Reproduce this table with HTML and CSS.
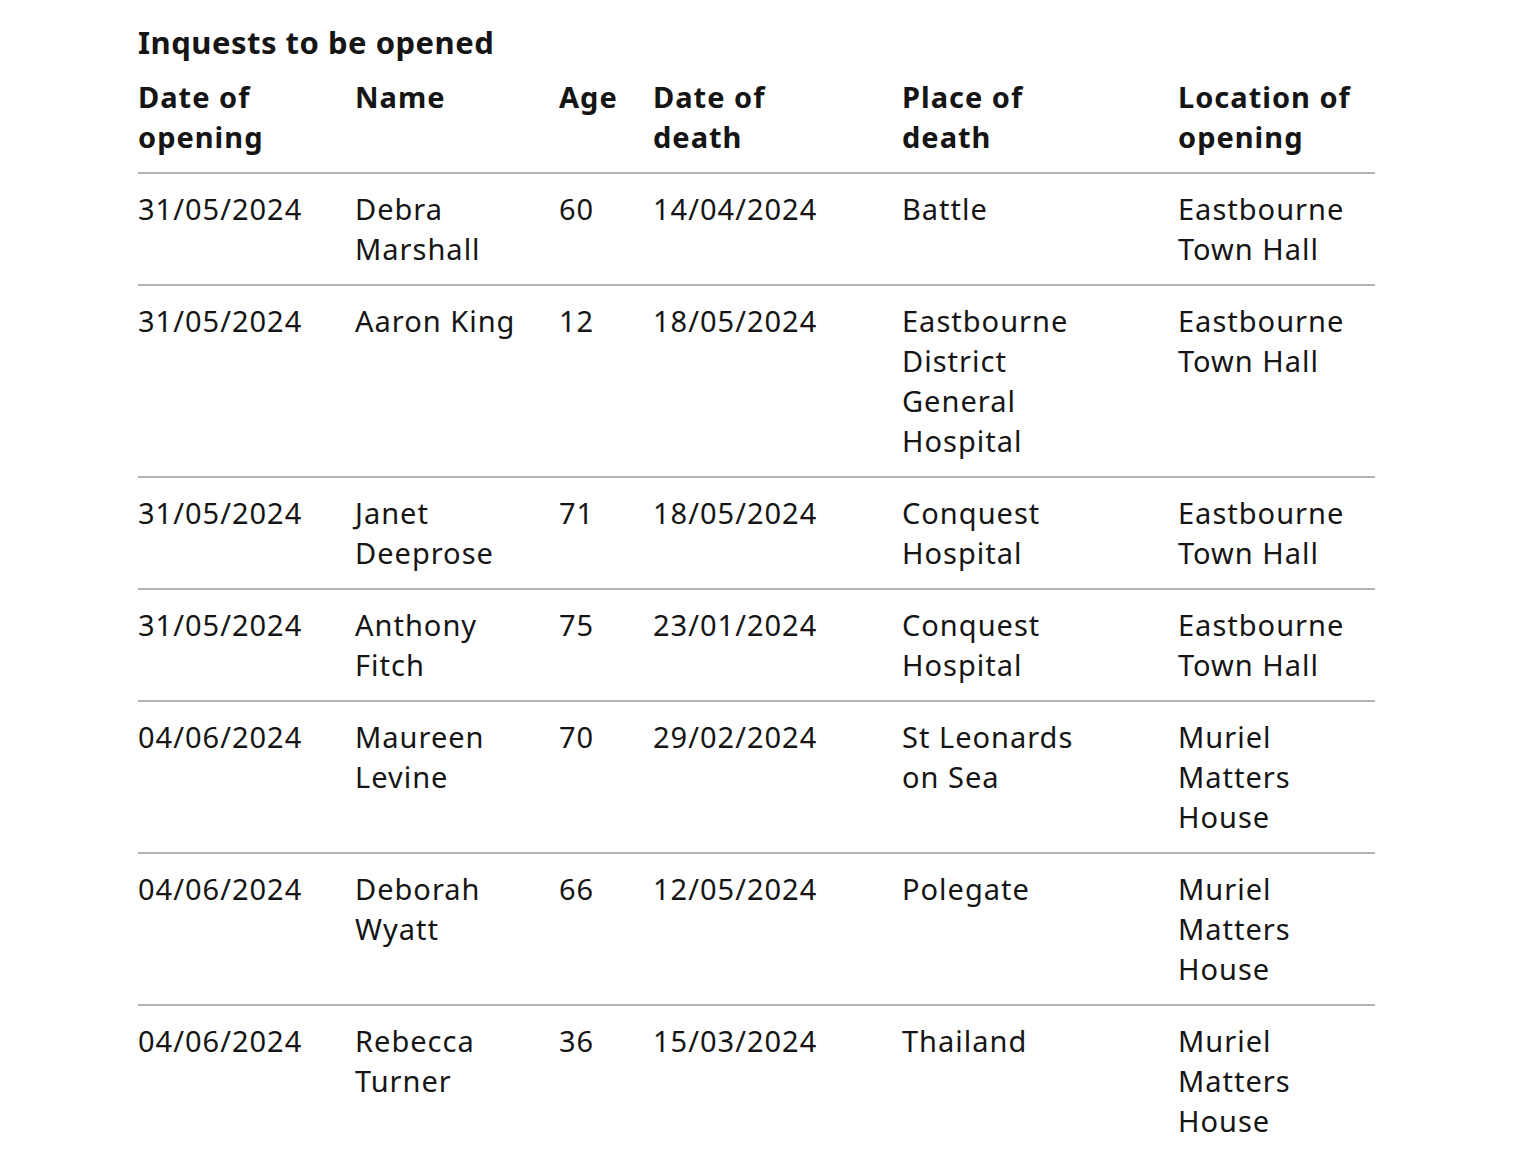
FILE: index.html
```html
<!DOCTYPE html>
<html lang="en">
<head>
<meta charset="utf-8">
<title>Inquests to be opened</title>
<link rel="stylesheet" href="styles.css">
</head>
<body>
<main class="page">
<table class="inquests">
<caption class="title">Inquests to be opened</caption>
<colgroup>
<col class="w-open"><col class="w-name"><col class="w-age"><col class="w-dod"><col class="w-place"><col class="w-loc">
</colgroup>
<thead>
<tr><th>Date of opening</th><th>Name</th><th>Age</th><th class="dod">Date of death</th><th class="place">Place of death</th><th>Location of opening</th></tr>
</thead>
<tbody>
<tr><td>31/05/2024</td><td>Debra Marshall</td><td>60</td><td class="dod">14/04/2024</td><td class="place">Battle</td><td>Eastbourne Town Hall</td></tr>
<tr><td>31/05/2024</td><td>Aaron King</td><td>12</td><td class="dod">18/05/2024</td><td class="place">Eastbourne District General Hospital</td><td>Eastbourne Town Hall</td></tr>
<tr><td>31/05/2024</td><td>Janet Deeprose</td><td>71</td><td class="dod">18/05/2024</td><td class="place">Conquest Hospital</td><td>Eastbourne Town Hall</td></tr>
<tr><td>31/05/2024</td><td>Anthony Fitch</td><td>75</td><td class="dod">23/01/2024</td><td class="place">Conquest Hospital</td><td>Eastbourne Town Hall</td></tr>
<tr><td>04/06/2024</td><td>Maureen Levine</td><td>70</td><td class="dod">29/02/2024</td><td class="place">St Leonards on Sea</td><td>Muriel Matters House</td></tr>
<tr><td>04/06/2024</td><td>Deborah Wyatt</td><td>66</td><td class="dod">12/05/2024</td><td class="place">Polegate</td><td>Muriel Matters House</td></tr>
<tr><td>04/06/2024</td><td>Rebecca Turner</td><td>36</td><td class="dod">15/03/2024</td><td class="place">Thailand</td><td>Muriel Matters House</td></tr>
</tbody>
</table>
</main>
</body>
</html>
```
FILE: styles.css
```css
html, body {
  margin: 0;
  padding: 0;
  background: #ffffff;
}
body {
  font-family: "Noto Sans", "Open Sans", sans-serif;
  color: #151515;
}
.page {
  padding: 22px 0 0 138px;
}
.inquests {
  border-collapse: collapse;
  table-layout: fixed;
  width: 1237px;
  font-size: 29px;
  line-height: 40px;
  letter-spacing: 1px;
}
.title {
  caption-side: top;
  text-align: left;
  font-size: 31px;
  font-weight: 700;
  line-height: 40px;
  letter-spacing: 0.5px;
}
.w-open { width: 217px; }
.w-name { width: 204px; }
.w-age { width: 94px; }
.w-dod { width: 249px; }
.w-place { width: 276px; }
.w-loc { width: 197px; }
th, td {
  text-align: left;
  vertical-align: top;
  padding: 15px 12px 15px 0;
  border-bottom: 2px solid #b3b3b3;
}
th {
  font-weight: 700;
}
.dod {
  padding-right: 40px;
}
.place {
  padding-right: 70px;
}
tbody tr:last-child td {
  border-bottom: none;
}
```
